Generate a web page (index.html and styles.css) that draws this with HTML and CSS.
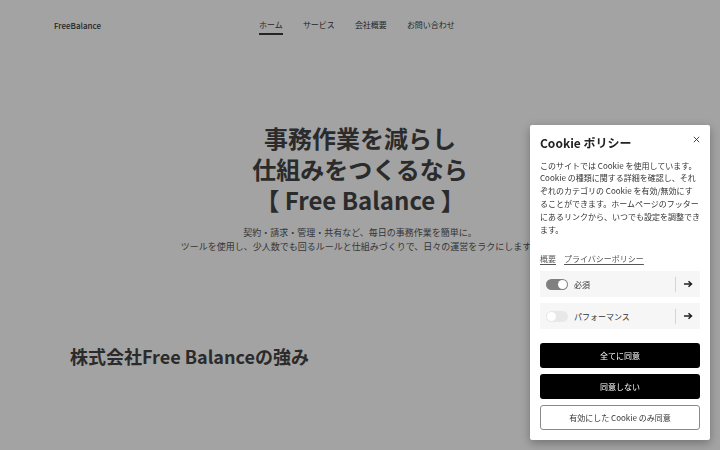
FILE: index.html
```html
<!DOCTYPE html>
<html lang="ja">
<head>
<meta charset="utf-8">
<title>FreeBalance</title>
<link rel="stylesheet" href="styles.css">
</head>
<body>
<div class="page">
  <header class="header">
    <div class="logo">FreeBalance</div>
    <nav class="nav">
      <a class="nav-item active">ホーム</a>
      <a class="nav-item">サービス</a>
      <a class="nav-item">会社概要</a>
      <a class="nav-item">お問い合わせ</a>
    </nav>
    <div class="header-spacer"></div>
  </header>
  <section class="hero">
    <h1 class="hero-title"><span class="hero-line">事務作業を減らし</span><span class="hero-line">仕組みをつくるなら</span><span class="hero-line">【 Free Balance 】</span></h1>
    <p class="hero-sub">契約・請求・管理・共有など、毎日の事務作業を簡単に。<br>ツールを使用し、少人数でも回るルールと仕組みづくりで、日々の運営をラクにします。</p>
  </section>
  <section class="strengths">
    <h2 class="section-title">株式会社Free Balanceの強み</h2>
  </section>
</div>
<div class="overlay"></div>
<aside class="cookie">
  <div class="cookie-head">
    <h3 class="cookie-title">Cookie ポリシー</h3>
    <button class="cookie-close" aria-label="閉じる">
      <svg width="7" height="7" viewBox="0 0 7 7"><path d="M0.8 0.8L6.2 6.2M6.2 0.8L0.8 6.2" stroke="#333" stroke-width="0.9" fill="none"/></svg>
    </button>
  </div>
  <p class="cookie-text">このサイトでは Cookie を使用しています。Cookie の種類に関する詳細を確認し、それぞれのカテゴリの Cookie を有効/無効にすることができます。ホームページのフッターにあるリンクから、いつでも設定を調整できます。</p>
  <div class="cookie-links">
    <a class="cookie-link">概要</a>
    <a class="cookie-link">プライバシーポリシー</a>
  </div>
  <div class="cookie-rows">
    <div class="cookie-row">
      <span class="toggle on"><span class="knob"></span></span>
      <span class="row-label">必須</span>
      <span class="row-sep"></span>
      <svg class="row-arrow" width="10" height="10" viewBox="0 0 10 10"><path d="M1 5H8M5.5 2.2L8.5 5L5.5 7.8" stroke="#222" stroke-width="1.5" fill="none"/></svg>
    </div>
    <div class="cookie-row">
      <span class="toggle"><span class="knob"></span></span>
      <span class="row-label">パフォーマンス</span>
      <span class="row-sep"></span>
      <svg class="row-arrow" width="10" height="10" viewBox="0 0 10 10"><path d="M1 5H8M5.5 2.2L8.5 5L5.5 7.8" stroke="#222" stroke-width="1.5" fill="none"/></svg>
    </div>
  </div>
  <div class="cookie-buttons">
    <button class="btn btn-dark">全てに同意</button>
    <button class="btn btn-dark">同意しない</button>
    <button class="btn btn-light">有効にした Cookie のみ同意</button>
  </div>
</aside>
</body>
</html>
```
FILE: styles.css
```css
* { box-sizing: border-box; }
html, body {
  margin: 0;
  padding: 0;
  width: 720px;
  height: 450px;
  overflow: hidden;
  background: #fff;
  font-family: "Noto Sans CJK JP", "Noto Sans", sans-serif;
  color: #444;
}
.page { width: 720px; height: 450px; }

.header {
  height: 50px;
  padding: 0 54px;
  display: grid;
  grid-template-columns: 1fr auto 1fr;
  align-items: center;
}
.logo { font-size: 8px; font-weight: 500; color: #3a3a3a; }
.nav { display: flex; gap: 20px; margin-right: 6px; }
.nav-item {
  font-size: 8px;
  line-height: 12px;
  color: #3a3a3a;
  text-decoration: none;
  padding-top: 4px;
  border-bottom: 2px solid transparent;
  padding-bottom: 2px;
}
.nav-item.active { border-bottom-color: #3a3a3a; }

.hero { text-align: center; padding-top: 72px; }
.hero-title {
  margin: 0;
  font-size: 24px;
  font-weight: 700;
  color: #444;
  display: flex;
  flex-direction: column;
  align-items: center;
}
.hero-line {
  display: block;
  height: 31.2px;
  line-height: 31.2px;
}
.hero-sub {
  margin: 10px 0 0;
  font-size: 9px;
  line-height: 14.4px;
  color: #555;
}
.strengths { padding: 89px 70px 0; }
.section-title {
  margin: 0;
  font-size: 18px;
  line-height: 27px;
  font-weight: 700;
  color: #444;
}

.overlay {
  position: fixed;
  inset: 0;
  background: rgba(0, 0, 0, 0.36);
}

.cookie {
  position: fixed;
  right: 10px;
  bottom: 10px;
  width: 180px;
  padding: 9px 10px 10px;
  background: #fff;
  border-radius: 2px;
  box-shadow: 0 3px 10px rgba(0, 0, 0, 0.3);
  color: #333;
}
.cookie-head { display: flex; justify-content: space-between; align-items: flex-start; }
.cookie-title { margin: 0; font-size: 12px; line-height: 18px; font-weight: 700; color: #222; }
.cookie-close {
  border: 0; background: none; padding: 0; margin: 0 -1px 0 0;
  width: 10px; height: 10px; display: flex; align-items: center; justify-content: center;
}
.cookie-text {
  margin: 7.6px 0 0;
  font-size: 8px;
  line-height: 12.8px;
  color: #333;
}
.cookie-links { display: flex; gap: 8px; margin-top: 16.6px; }
.cookie-link {
  font-size: 8px;
  line-height: 12px;
  color: #555;
  text-decoration: underline;
  text-underline-offset: 1.5px;
}
.cookie-rows { display: flex; flex-direction: column; gap: 6px; margin-top: 6px; }
.cookie-row {
  height: 26px;
  background: #f6f6f6;
  display: flex;
  align-items: center;
  padding: 0 7px 0 6px;
}
.toggle {
  width: 22px; height: 11px; border-radius: 6px;
  background: #e8e8e8;
  display: flex; align-items: center; padding: 0 1px;
}
.toggle.on { background: #808080; justify-content: flex-end; }
.knob { width: 9px; height: 9px; border-radius: 50%; background: #fff; }
.row-label { margin-left: 6px; font-size: 8px; color: #333; flex: 1; }
.row-sep { width: 1px; height: 15px; background: #d4d4d4; margin-right: 7px; }
.row-arrow { display: block; }

.cookie-buttons { display: flex; flex-direction: column; gap: 6px; margin-top: 14px; }
.btn {
  height: 25px;
  border-radius: 3px;
  font-family: inherit;
  font-size: 8px;
  cursor: pointer;
}
.btn-dark { background: #000; color: #fff; border: 0; }
.btn-light { background: #fff; color: #333; border: 1px solid #8a8a8a; }
```
